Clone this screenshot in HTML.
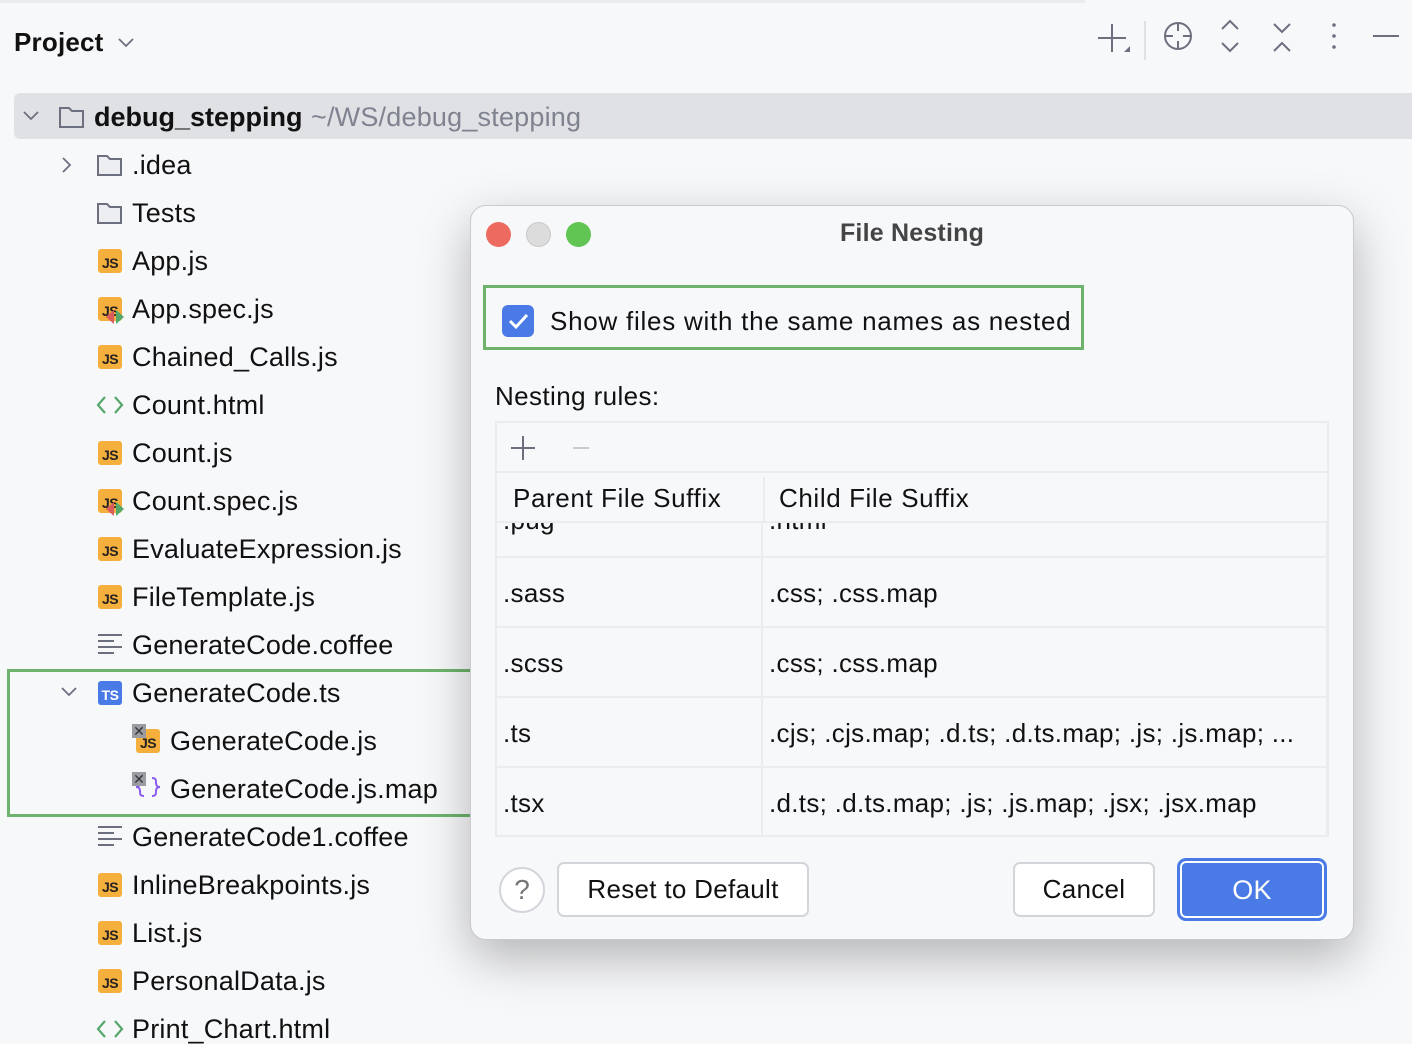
<!DOCTYPE html>
<html><head><meta charset="utf-8"><style>
*{margin:0;padding:0;box-sizing:border-box}
body{width:1412px;height:1040px;background:#f7f8fa;font-family:"Liberation Sans",sans-serif;color:#111;position:relative;overflow:hidden}
.a{position:absolute}
.t{position:absolute;font-size:27px;line-height:30px;white-space:nowrap;letter-spacing:.2px}
.js{position:absolute;width:24px;height:24px;background:#f4af3d;border-radius:3px;font:bold 14px "Liberation Sans",sans-serif;color:#222;text-align:center;line-height:28px;letter-spacing:-.5px}
.ico{position:absolute}
.cell{position:absolute;font-size:26px;white-space:nowrap;letter-spacing:.3px}
.btn{position:absolute;background:#fff;border:2px solid #d3d5db;border-radius:7px;font-size:26px;text-align:center;letter-spacing:.3px}
</style></head><body>
<div class="a" style="left:0;top:0;width:1085px;height:3px;background:#ebecf0"></div>
<div class="t" style="left:14px;top:27px;font-weight:bold;font-size:26px">Project</div>
<svg class="ico" style="left:117px;top:36px" width="18" height="14"><path d="M2 3l7 7 7-7" fill="none" stroke="#6c707e" stroke-width="1.8"/></svg>
<svg class="ico" style="left:1090px;top:15px" width="320" height="45" fill="none" stroke="#6c707e" stroke-width="2">
<path d="M22 9v28M8 23h28"/><path d="M40 37h-6l6-6z" fill="#6c707e" stroke="none"/>
<path d="M55 6v40" stroke="#dfe1e5"/>
<circle cx="88" cy="21" r="13"/><path d="M88 8v8M88 26v8M75 21h8M93 21h8"/>
<path d="M132 14l8-8 8 8M132 28l8 8 8-8"/>
<path d="M184 9l8 8 8-8M184 36l8-8 8 8"/>
<circle cx="244" cy="10" r="1.8" fill="#6c707e" stroke="none"/><circle cx="244" cy="21" r="1.8" fill="#6c707e" stroke="none"/><circle cx="244" cy="32" r="1.8" fill="#6c707e" stroke="none"/>
<path d="M283 21h26"/></svg>

<div class="a" style="left:14px;top:93px;width:1398px;height:46px;background:#dfe1e5;border-radius:6px 0 0 6px"></div>
<svg class="ico" style="left:21px;top:109px" width="20" height="14"><path d="M3 3l7 7 7-7" fill="none" stroke="#6c707e" stroke-width="1.8"/></svg>
<svg class="ico" style="left:58px;top:104px" width="28" height="26"><path d="M2 4h9l3 3h11v16H2z" fill="none" stroke="#6c707e" stroke-width="2"/></svg>
<div class="t" style="left:94px;top:102px;font-weight:bold;letter-spacing:0">debug_stepping</div>
<div class="t" style="left:311px;top:102px;color:#7f8390">~/WS/debug_stepping</div>

<svg class="ico" style="left:60px;top:155px" width="14" height="20"><path d="M3 3l7 7-7 7" fill="none" stroke="#6c707e" stroke-width="1.8"/></svg>
<svg class="ico" style="left:96px;top:152px" width="28" height="26"><path d="M2 4h9l3 3h11v16H2z" fill="#eceef2" stroke="#6c707e" stroke-width="2"/></svg>
<div class="t" style="left:132px;top:150px">.idea</div>
<svg class="ico" style="left:96px;top:200px" width="28" height="26"><path d="M2 4h9l3 3h11v16H2z" fill="#eceef2" stroke="#6c707e" stroke-width="2"/></svg>
<div class="t" style="left:132px;top:198px">Tests</div>

<div class="js" style="left:98px;top:249px">JS</div><div class="t" style="left:132px;top:246px">App.js</div>
<div class="js" style="left:98px;top:297px">JS</div><svg class="ico" style="left:105px;top:308px" width="22" height="18"><path d="M1 9l8-7v14z" fill="#db5c5c"/><path d="M11 2l8 7-8 7z" fill="#55a76a"/></svg><div class="t" style="left:132px;top:294px">App.spec.js</div>
<div class="js" style="left:98px;top:345px">JS</div><div class="t" style="left:132px;top:342px">Chained_Calls.js</div>
<svg class="ico" style="left:95px;top:394px" width="30" height="22"><path d="M10 3l-7 8 7 8M20 3l7 8-7 8" fill="none" stroke="#55a76a" stroke-width="2.2"/></svg><div class="t" style="left:132px;top:390px">Count.html</div>
<div class="js" style="left:98px;top:441px">JS</div><div class="t" style="left:132px;top:438px">Count.js</div>
<div class="js" style="left:98px;top:489px">JS</div><svg class="ico" style="left:105px;top:500px" width="22" height="18"><path d="M1 9l8-7v14z" fill="#db5c5c"/><path d="M11 2l8 7-8 7z" fill="#55a76a"/></svg><div class="t" style="left:132px;top:486px">Count.spec.js</div>
<div class="js" style="left:98px;top:537px">JS</div><div class="t" style="left:132px;top:534px">EvaluateExpression.js</div>
<div class="js" style="left:98px;top:585px">JS</div><div class="t" style="left:132px;top:582px">FileTemplate.js</div>
<svg class="ico" style="left:97px;top:633px" width="26" height="24" stroke="#6c707e" stroke-width="2"><path d="M1 2h24M1 8h16M1 14h24M1 20h16"/></svg><div class="t" style="left:132px;top:630px">GenerateCode.coffee</div>

<div class="a" style="left:7px;top:669px;width:470px;height:148px;border:3px solid #6db36b;border-right:none"></div>
<svg class="ico" style="left:59px;top:685px" width="20" height="14"><path d="M3 3l7 7 7-7" fill="none" stroke="#6c707e" stroke-width="1.8"/></svg>
<div class="js" style="left:98px;top:681px;background:#4a7ae6;color:#fff">TS</div><div class="t" style="left:132px;top:678px">GenerateCode.ts</div>
<div class="js" style="left:136px;top:729px">JS</div><div class="a" style="left:132px;top:724px;width:14px;height:14px;background:#9a9ca2;color:#333;font-size:14px;line-height:14px;text-align:center">✕</div><div class="t" style="left:170px;top:726px">GenerateCode.js</div>
<svg class="ico" style="left:134px;top:774px" width="28" height="28"><path d="M10 4c-4 0-4 2-4 5s-2 4-4 4c2 0 4 1 4 4s0 5 4 5M18 4c4 0 4 2 4 5s2 4 4 4c-2 0-4 1-4 4s0 5-4 5" fill="none" stroke="#8a5cf0" stroke-width="2"/></svg><div class="a" style="left:132px;top:772px;width:14px;height:14px;background:#9a9ca2;color:#333;font-size:14px;line-height:14px;text-align:center">✕</div><div class="t" style="left:170px;top:774px">GenerateCode.js.map</div>

<svg class="ico" style="left:97px;top:825px" width="26" height="24" stroke="#6c707e" stroke-width="2"><path d="M1 2h24M1 8h16M1 14h24M1 20h16"/></svg><div class="t" style="left:132px;top:822px">GenerateCode1.coffee</div>
<div class="js" style="left:98px;top:873px">JS</div><div class="t" style="left:132px;top:870px">InlineBreakpoints.js</div>
<div class="js" style="left:98px;top:921px">JS</div><div class="t" style="left:132px;top:918px">List.js</div>
<div class="js" style="left:98px;top:969px">JS</div><div class="t" style="left:132px;top:966px">PersonalData.js</div>
<svg class="ico" style="left:95px;top:1018px" width="30" height="22"><path d="M10 3l-7 8 7 8M20 3l7 8-7 8" fill="none" stroke="#55a76a" stroke-width="2.2"/></svg><div class="t" style="left:132px;top:1014px">Print_Chart.html</div>

<!-- dialog -->
<div class="a" style="left:470px;top:205px;width:884px;height:735px;background:#f7f8fa;border:1px solid #c9cbd0;border-radius:16px;box-shadow:0 18px 50px rgba(0,0,0,.28)"></div>
<div class="a" style="left:486px;top:222px;width:25px;height:25px;border-radius:50%;background:#ec6a5e"></div>
<div class="a" style="left:526px;top:222px;width:25px;height:25px;border-radius:50%;background:#dcdcdc;border:1px solid #c8c8c8"></div>
<div class="a" style="left:566px;top:222px;width:25px;height:25px;border-radius:50%;background:#61c554"></div>
<div class="t" style="left:470px;width:884px;text-align:center;top:218px;font-weight:bold;font-size:25px;color:#444">File Nesting</div>

<div class="a" style="left:483px;top:285px;width:601px;height:65px;border:3px solid #6db36b"></div>
<div class="a" style="left:502px;top:305px;width:32px;height:32px;border-radius:6px;background:#4a7ae6"></div>
<svg class="ico" style="left:502px;top:305px" width="32" height="32"><path d="M8 16l6 6 11-12" fill="none" stroke="#fff" stroke-width="3"/></svg>
<div class="t" style="left:550px;top:306px;font-size:26px;letter-spacing:.75px">Show files with the same names as nested</div>
<div class="t" style="left:495px;top:381px;font-size:26px;letter-spacing:.4px">Nesting rules:</div>

<div class="a" style="left:495px;top:421px;width:834px;height:416px;border:2px solid #ebecf0;overflow:hidden;background:#f7f8fa">
 <svg class="ico" style="left:12px;top:10px" width="80" height="30" stroke-width="2"><path d="M14 3v24M2 15h24" stroke="#6c707e"/><path d="M64 15h26" stroke="#c9cbd0"/></svg>
 <div class="a" style="left:0;top:48px;width:834px;height:2px;background:#ebecf0"></div>
 <div class="cell" style="left:6px;top:82px">.pug</div><div class="cell" style="left:272px;top:82px">.html</div>
 <div class="a" style="left:0;top:50px;width:834px;height:50px;background:#f7f8fa;border-bottom:2px solid #ebecf0"></div>
 <div class="a" style="left:266px;top:54px;width:2px;height:44px;background:#ebecf0"></div>
 <div class="cell" style="left:16px;top:60px;letter-spacing:.6px">Parent File Suffix</div><div class="cell" style="left:282px;top:60px;letter-spacing:.6px">Child File Suffix</div>
 <div class="a" style="left:264px;top:100px;width:2px;height:320px;background:#ebecf0"></div>
 <div class="a" style="left:0;top:133px;width:834px;height:2px;background:#ebecf0"></div>
 <div class="a" style="left:0;top:203px;width:834px;height:2px;background:#ebecf0"></div>
 <div class="a" style="left:0;top:273px;width:834px;height:2px;background:#ebecf0"></div>
 <div class="a" style="left:0;top:343px;width:834px;height:2px;background:#ebecf0"></div>
 <div class="a" style="left:829px;top:100px;width:3px;height:320px;background:#ebecf0"></div>
 <div class="cell" style="left:6px;top:155px">.sass</div><div class="cell" style="left:272px;top:155px">.css; .css.map</div>
 <div class="cell" style="left:6px;top:225px">.scss</div><div class="cell" style="left:272px;top:225px">.css; .css.map</div>
 <div class="cell" style="left:6px;top:295px">.ts</div><div class="cell" style="left:272px;top:295px">.cjs; .cjs.map; .d.ts; .d.ts.map; .js; .js.map; ...</div>
 <div class="cell" style="left:6px;top:365px">.tsx</div><div class="cell" style="left:272px;top:365px">.d.ts; .d.ts.map; .js; .js.map; .jsx; .jsx.map</div>
</div>

<div class="a" style="left:499px;top:867px;width:46px;height:46px;border-radius:50%;border:2px solid #d3d5db;background:#fff;text-align:center;font-size:28px;line-height:42px;color:#777">?</div>
<div class="btn" style="left:557px;top:862px;width:252px;height:55px;line-height:51px">Reset to Default</div>
<div class="btn" style="left:1013px;top:862px;width:142px;height:55px;line-height:51px">Cancel</div>
<div class="a" style="left:1177px;top:858px;width:150px;height:63px;border-radius:9px;background:#4a7ae6;border:3px solid #4a7ae6;box-shadow:inset 0 0 0 2px #fff"></div>
<div class="t" style="left:1177px;width:150px;top:875px;text-align:center;color:#fff;font-size:27px">OK</div>
</body></html>
